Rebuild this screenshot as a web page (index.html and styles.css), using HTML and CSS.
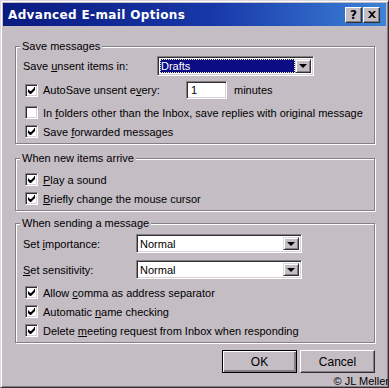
FILE: index.html
```html
<!DOCTYPE html>
<html>
	<head>
		<meta charset="UTF-8">
		<title>Advanced E-mail Options</title>
		<link rel="stylesheet" href="styles.css">
	</head>
	<body>
		<div class="window">
			<div class="titlebar">
				<span class="title">Advanced E-mail Options</span>
				<span class="tbtn help">?</span>
				<span class="tbtn close">
					<svg width="8" height="7" viewBox="0 0 8 7"><path d="M0 0h2l2 2 2-2h2L5 3.5 8 7H6L4 5 2 7H0l3-3.5z" fill="#000"/></svg>
				</span>
			</div>
			<div class="content">
				<div class="group g1">
					<div class="legend">Save messages</div>
					<div class="row r1">
						<span class="label lbl1">Save <u>u</u>nsent items in:</span>
						<div class="select sel1 focus">
							<span class="value">Drafts</span>
							<span class="arrow"><i></i></span>
						</div>
					</div>
					<div class="row r2">
						<span class="check on"></span>
						<span class="label lbl2">AutoSave unsent e<u>v</u>ery:</span>
						<span class="textbox">1</span>
						<span class="unit">minutes</span>
					</div>
					<div class="row r3">
						<span class="check"></span>
						<span class="label">In <u>f</u>olders other than the Inbox, save replies with original message</span>
					</div>
					<div class="row">
						<span class="check on"></span>
						<span class="label">Save <u>f</u>orwarded messages</span>
					</div>
				</div>

				<div class="group g2">
					<div class="legend">When new items arrive</div>
					<div class="row r5">
						<span class="check on"></span>
						<span class="label"><u>P</u>lay a sound</span>
					</div>
					<div class="row">
						<span class="check on"></span>
						<span class="label"><u>B</u>riefly change the mouse cursor</span>
					</div>
				</div>

				<div class="group g3">
					<div class="legend">When sending a message</div>
					<div class="row r7">
						<span class="label lbl3">Set <u>i</u>mportance:</span>
						<div class="select sel2">
							<span class="value">Normal</span>
							<span class="arrow"><i></i></span>
						</div>
					</div>
					<div class="row r8">
						<span class="label lbl3"><u>S</u>et sensitivity:</span>
						<div class="select sel2">
							<span class="value">Normal</span>
							<span class="arrow"><i></i></span>
						</div>
					</div>
					<div class="row r9">
						<span class="check on"></span>
						<span class="label">Allow <u>c</u>omma as address separator</span>
					</div>
					<div class="row">
						<span class="check on"></span>
						<span class="label">Automatic <u>n</u>ame checking</span>
					</div>
					<div class="row">
						<span class="check on"></span>
						<span class="label">Delete <u>m</u>eeting request from Inbox when responding</span>
					</div>
				</div>

				<div class="buttons">
					<span class="btn default">OK</span>
					<span class="btn">Cancel</span>
				</div>
				<div class="copy">© JL Meller</div>
			</div>
		</div>
	</body>
</html>
```
FILE: styles.css
```css
*{margin: 0;padding: 0;box-sizing: border-box;}
body{
	background: #c4bdc4;
	font-family: "Liberation Sans", Arial, sans-serif;
	font-size: 11px;
	color: #000;
	overflow: hidden;
}
u{text-decoration: underline;text-underline-offset: 1px;}

.window{
	width: 389px;
	height: 388px;
	background: #c4bdc4;
	border: 1px solid;
	border-color: #ddd8dd #303030 #303030 #ddd8dd;
	box-shadow: inset 1px 1px 0 #fff, inset -1px -1px 0 #857f85;
	padding: 2px;
	overflow: hidden;
}

/* title bar */
.titlebar{
	height: 23px;
	background: linear-gradient(to right, #0a1a80 0%, #1838a8 55%, #3c82d8 100%);
	display: flex;
	align-items: center;
	padding: 0 6px 0 5px;
}
.title{
	flex: 1;
	color: #fff;
	font-family: "DejaVu Sans", Verdana, sans-serif;
	font-weight: bold;
	font-size: 12px;
	letter-spacing: 0.35px;
}
.tbtn{
	width: 17px;
	height: 16px;
	background: #c4bdc4;
	border: 1px solid;
	border-color: #fff #303030 #303030 #fff;
	box-shadow: inset -1px -1px 0 #857f85;
	display: flex;
	align-items: center;
	justify-content: center;
	font-weight: bold;
	font-size: 12px;
	font-family: "DejaVu Sans", sans-serif;
}
.tbtn.help{margin-right: 1px;}

.content{
	padding: 0 0 0 12px;
}

/* groups */
.group{
	width: 360px;
	border: 1px solid #857f85;
	box-shadow: inset 1px 1px 0 #fff, 1px 1px 0 #fff;
	padding: 0 0 2px 7px;
}
.g1{margin-top: 20px;}
.g2{margin-top: 14px;}
.g3{margin-top: 12px;}
.legend{
	width: fit-content;
	height: 14px;
	line-height: 14px;
	margin: -8px 0 0 -3px;
	padding: 0 2px;
	background: #c4bdc4;
}

.row{
	height: 19px;
	display: flex;
	align-items: center;
}
.r1{height: 20px;margin-top: 3px;}
.r2{height: 20px;margin-top: 4px;}
.r3{margin-top: 3px;}
.r5{margin-top: 5px;}
.r7{margin-top: 4px;}
.r8{margin-top: 7px;}
.r9{margin-top: 4px;}

.lbl1{width: 134px;}
.lbl2{width: 143px;}
.lbl3{width: 113px;}

/* checkbox */
.check{
	width: 13px;
	height: 13px;
	margin: 0 5px 0 2px;
	background: #fff;
	border: 1px solid;
	border-color: #857f85 #fff #fff #857f85;
	box-shadow: inset 1px 1px 0 #303030, inset -1px -1px 0 #d8d2d8;
	flex: none;
}
.check.on{
	background: #fff url("data:image/svg+xml,%3Csvg xmlns='http://www.w3.org/2000/svg' width='7' height='7'%3E%3Cpath d='M6 0h1v3L3 7H2L0 5V2l2 2h1l3-3z' fill='%23000'/%3E%3C/svg%3E") no-repeat 2px 2px;
}

/* text box */
.textbox{
	width: 41px;
	height: 18px;
	background: #fff;
	border: 1px solid;
	border-color: #857f85 #fff #fff #857f85;
	box-shadow: inset 1px 1px 0 #303030, inset -1px -1px 0 #d8d2d8;
	padding: 1px 0 0 4px;
	line-height: 15px;
}
.unit{margin-left: 7px;}

/* dropdowns */
.select{
	display: flex;
	background: #fff;
	border: 1px solid;
	border-color: #857f85 #fff #fff #857f85;
	box-shadow: inset 1px 1px 0 #303030, inset -1px -1px 0 #d8d2d8;
	padding: 2px;
}
.sel1{width: 157px;height: 20px;}
.sel2{width: 166px;height: 19px;}
.select .value{
	flex: 1;
	line-height: 14px;
	padding-left: 1px;
}
.select.focus .value{
	background: #0c0c84;
	color: #fff;
	outline: 1px dotted #f4f0a0;
	outline-offset: -1px;
}
.arrow{
	width: 16px;
	background: #c4bdc4;
	border: 1px solid;
	border-color: #ddd8dd #303030 #303030 #ddd8dd;
	box-shadow: inset 1px 1px 0 #fff, inset -1px -1px 0 #857f85;
	display: flex;
	align-items: center;
	justify-content: center;
}
.arrow i{
	width: 0;
	height: 0;
	border-left: 4px solid transparent;
	border-right: 4px solid transparent;
	border-top: 4px solid #000;
}

/* buttons */
.buttons{
	display: flex;
	justify-content: flex-end;
	gap: 3px;
	margin-top: 7px;
	padding-right: 11px;
}
.btn{
	width: 75px;
	height: 23px;
	background: #c4bdc4;
	border: 1px solid;
	border-color: #fff #303030 #303030 #fff;
	box-shadow: inset -1px -1px 0 #857f85;
	display: flex;
	align-items: center;
	justify-content: center;
	font-size: 12px;
}
.btn.default{
	border: 1px solid #000;
	box-shadow: inset 1px 1px 0 #fff, inset -2px -2px 0 #857f85, inset -1px -1px 0 #303030;
}

.copy{
	text-align: right;
	margin: 2px -3px 0 0;
	font-size: 11px;
	line-height: 12px;
}
```
